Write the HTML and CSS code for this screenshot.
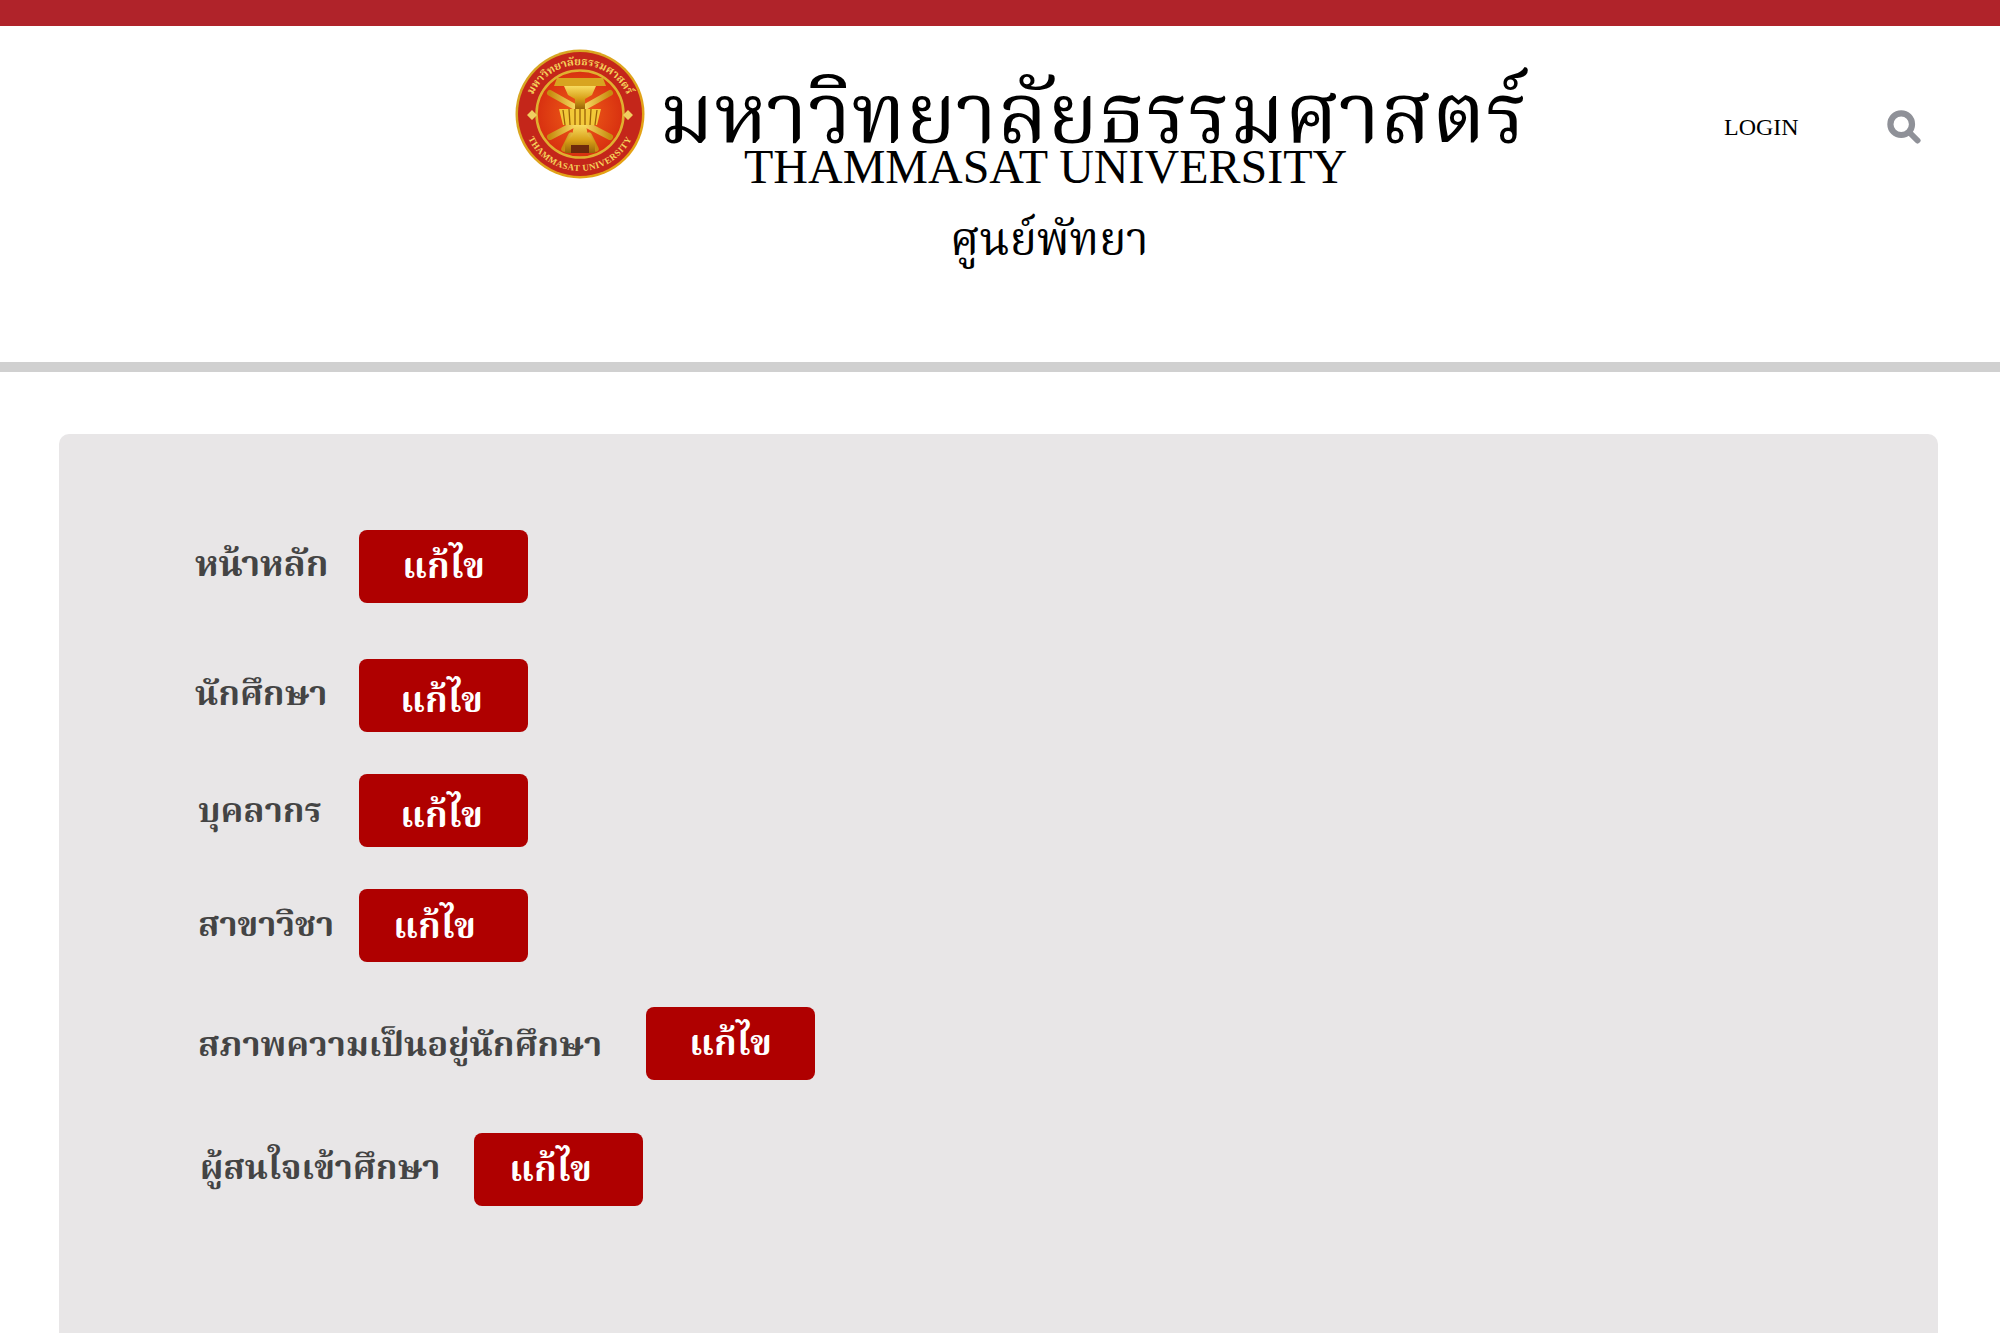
FILE: index.html
```html
<!DOCTYPE html>
<html lang="th">
<head>
<meta charset="utf-8">
<title>มหาวิทยาลัยธรรมศาสตร์ ศูนย์พัทยา</title>
<link rel="stylesheet" href="styles.css">
</head>
<body>
<div class="topbar"></div>
<header class="header">
  <div class="brand">
    <div class="brand-top">
      <svg class="seal" viewBox="0 0 130 130" aria-label="ตรามหาวิทยาลัย">
        <defs>
          <linearGradient id="g" x1="0" y1="0" x2="0" y2="1"><stop offset="0" stop-color="#f8dc60"/><stop offset=".55" stop-color="#d8a018"/><stop offset="1" stop-color="#9a6408"/></linearGradient>
          <linearGradient id="spoke" x1="0" y1="0" x2="1" y2="0"><stop offset="0" stop-color="#c88c10"/><stop offset=".5" stop-color="#ffe670"/><stop offset="1" stop-color="#c88c10"/></linearGradient>
          <linearGradient id="ring" x1="0" y1="0" x2="1" y2="1"><stop offset="0" stop-color="#d4a828"/><stop offset="1" stop-color="#e8a010"/></linearGradient>
          <radialGradient id="field" cx="50%" cy="50%" r="50%"><stop offset="0" stop-color="#f06018"/><stop offset="1" stop-color="#d83010"/></radialGradient>
          <path id="arcTop" d="M13 68a52 52 0 0 1 104 0"/>
          <path id="arcBot" d="M8 72a57.500 57.500 0 0 0 114 0"/>
        </defs>
        <circle cx="65" cy="65" r="64.500" fill="url(#ring)"/>
        <circle cx="65" cy="65" r="62" fill="#c4261a"/>
        <circle cx="65" cy="65" r="43.500" fill="url(#field)" stroke="#e0b030" stroke-width="2.500"/>
        <text class="seal-th"><textPath href="#arcTop" startOffset="50%" text-anchor="middle">มหาวิทยาลัยธรรมศาสตร์</textPath></text>
        <text class="seal-en"><textPath href="#arcBot" startOffset="50%" text-anchor="middle">THAMMASAT UNIVERSITY</textPath></text>
        <g fill="none" stroke="url(#spoke)" stroke-linecap="round">
          <path stroke-width="6" d="M60 58 35 44M70 58 95 44"/>
          <path stroke-width="6.500" d="M55 66H30M75 66H100"/>
          <path stroke-width="6" d="M58 76 35 88M72 76 95 88"/>
          <path stroke-width="5.500" d="M56 86 49 100M74 86 81 100"/>
        </g>
        <path d="M42 29h46l3 8H39z" fill="#d8a420"/>
        <path d="M49 37h32l-4 9-7 4v10h-10v-10l-7-4z" fill="url(#g)"/>
        <path d="M44 60h42l-4 16H48z" fill="#f2c838"/>
        <path d="M48 61l2 15M54 60l1 16M60 60v16M65 60v16M70 60v16M76 60l-1 16M82 61l-2 15" stroke="#9a6208" stroke-width="1.300"/>
        <path d="M59 76h12l2 11 7 6v11H50v-11l7-6z" fill="url(#g)"/>
        <path d="M56 96h18v8H56z" fill="#6e2a0c"/>
        <path d="M12 66l5-5 5 5-5 5zM108 66l5-5 5 5-5 5z" fill="#f0cf60"/>
      </svg>
      <div class="name-th">มหาวิทยาลัยธรรมศาสตร์</div>
    </div>
    <div class="name-en">THAMMASAT UNIVERSITY</div>
    <div class="campus">ศูนย์พัทยา</div>
  </div>
  <nav class="tools">
    <a class="login">LOGIN</a>
    <svg class="search" viewBox="0 0 34 34" aria-label="ค้นหา"><circle cx="14.200" cy="14.200" r="10.800" fill="none" stroke="#8f9198" stroke-width="6.200"/><path d="M23 23 30.500 30.500" stroke="#8f9198" stroke-width="6" stroke-linecap="round"/></svg>
  </nav>
</header>
<main class="card">
  <div class="row r1"><span class="label">หน้าหลัก</span><a class="btn">แก้ไข</a></div>
  <div class="row r2"><span class="label">นักศึกษา</span><a class="btn">แก้ไข</a></div>
  <div class="row r3"><span class="label">บุคลากร</span><a class="btn">แก้ไข</a></div>
  <div class="row r4"><span class="label">สาขาวิชา</span><a class="btn">แก้ไข</a></div>
  <div class="row r5"><span class="label">สภาพความเป็นอยู่นักศึกษา</span><a class="btn">แก้ไข</a></div>
  <div class="row r6"><span class="label">ผู้สนใจเข้าศึกษา</span><a class="btn">แก้ไข</a></div>
</main>
</body>
</html>
```
FILE: styles.css
```css
* { box-sizing: border-box; }
html, body { margin: 0; background: #fff; height: 1333px; overflow: hidden; }
body { font-family: "Liberation Serif", "Noto Serif Thai", serif; color: #000; }
.topbar { height: 26px; background: #b0232a; }
.header { height: 346px; border-bottom: 10px solid #d0d0d0; position: relative; }
.brand { width: 1040px; margin-left: 515px; }
.brand-top { display: flex; align-items: flex-start; gap: 14px; padding-top: 23px; }
.seal { width: 130px; height: 130px; flex: none; }
.seal-th { font-size: 11px; fill: #f5d25a; font-weight: bold; }
.seal-en { font-size: 9px; fill: #f5d25a; font-weight: bold; letter-spacing: .5px; }
.name-th { font-family: "Noto Serif Thai", serif; font-size: 84px; line-height: 54px; margin-top: 44px; white-space: nowrap; }
.name-en { font-size: 48px; line-height: 46px; width: 602px; margin: -35px 0 0 229px; white-space: nowrap; }
.campus { font-family: "Noto Serif Thai", serif; font-size: 45.5px; line-height: 70px; margin: 18px 0 0 435px; white-space: nowrap; }
.tools { position: absolute; top: 84px; left: 1724px; display: flex; align-items: center; gap: 90px; }
.login { font-size: 24px; }
.search { width: 34px; height: 34px; margin-left: -2px; }
.card { margin: 62px 62px 0 59px; height: 920px; background: #e8e6e7; border-radius: 10px; padding-top: 96px; }
.row { display: flex; align-items: center; padding-left: 136px; }
.label { font-family: "Noto Serif Thai", serif; font-size: 34.5px; font-weight: bold; color: #444; white-space: nowrap; flex: none; width: 164px; }
.btn { font-family: "Noto Serif Thai", serif; width: 169px; height: 73px; padding-top: 3px; background: #af0000; color: #fff; font-size: 36px; font-weight: bold; border-radius: 8px; display: flex; align-items: center; justify-content: center; flex: none; }
.r1 .label { font-size: 36px; }
.r2 { margin-top: 56px; }
.r3 { margin-top: 42px; }
.r3 .label { padding: 3px 0 0 3px; }
.r4 { margin-top: 42px; }
.r4 .label { padding: 1px 0 0 3px; }
.r5 { margin-top: 45px; }
.r5 .label { width: 451px; padding: 5px 0 0 3px; }
.r6 { margin-top: 53px; }
.r6 .label { width: 279px; padding-left: 5px; }
.r2 .btn, .r3 .btn { padding: 14px 4px 0 0; }
.r4 .btn { padding: 6px 18px 0 0; }
.r6 .btn { padding: 3px 16px 0 0; }
```
